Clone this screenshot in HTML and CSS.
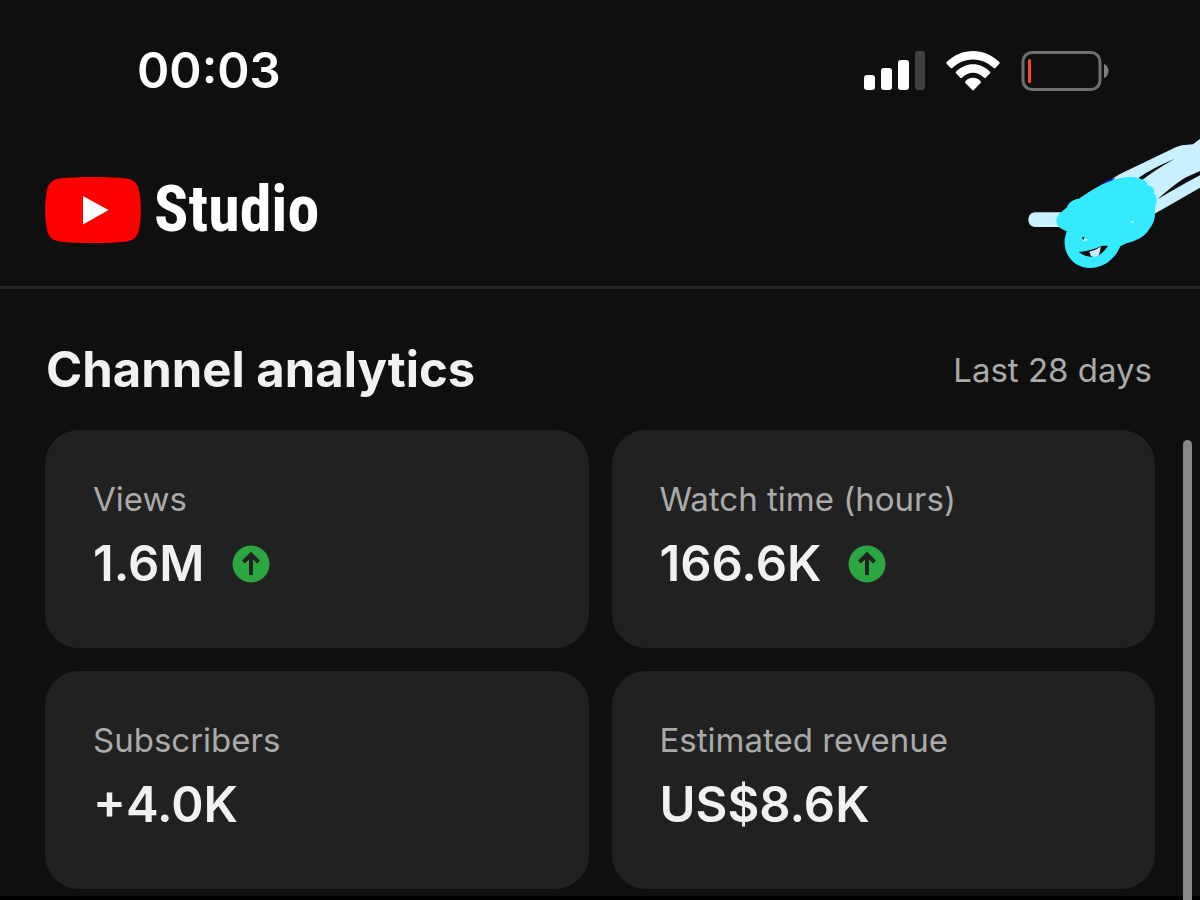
FILE: index.html
```html
<!DOCTYPE html>
<html lang="en">
<head>
<meta charset="utf-8">
<meta name="viewport" content="width=device-width, initial-scale=1">
<title>YouTube Studio</title>
<link rel="stylesheet" href="styles.css">
</head>
<body>
<div class="app">
  <div class="status-bar">
    <time class="clock">00:03</time>
    <div class="status-icons">
      <svg class="signal" viewBox="0 0 62 40" aria-label="Signal strength">
        <rect x="1" y="24" width="11" height="15" rx="3"/>
        <rect x="18" y="17" width="11" height="22" rx="3"/>
        <rect x="35" y="9" width="11" height="30" rx="3"/>
        <rect class="signal-off" x="52" y="0" width="10" height="39" rx="3"/>
      </svg>
      <svg class="wifi" viewBox="0 0 162 120" aria-label="Wi-Fi">
        <path d="M2 38Q0 36 2 33C48-11 114-11 160 33Q162 36 160 38L148 51Q146 53 143 51C106 17 56 17 19 51Q16 53 14 51Z"/>
        <path d="M30 67Q28 65 30 62C60 32 102 32 132 62Q134 65 132 67L119 80Q117 82 114 80C94 60 68 60 48 80Q45 82 43 80Z"/>
        <path d="M58 96Q55 93 59 90C71 77 91 77 103 90Q107 93 104 96L84 116Q81 119 78 116Z"/>
      </svg>
      <svg class="battery" viewBox="0 0 88 40" aria-label="Battery low">
        <rect class="battery-shell" x="2" y="1.500" width="77" height="37" rx="9"/>
        <rect class="battery-level" x="7" y="8" width="3" height="24" rx="1.500"/>
        <path class="battery-tip" d="M83 13C89 15 89 25 83 27Z"/>
      </svg>
    </div>
  </div>

  <header class="header">
    <a class="brand" href="#" aria-label="YouTube Studio">
      <svg class="brand-mark" viewBox="0 0 96 66">
        <path class="brand-tile" d="M14 1.500C34-.5 62-.5 82 1.500Q92 3 94 13C96.500 26 96.500 40 94 53Q92 63 82 64.500C62 66.500 34 66.500 14 64.500Q4 63 2 53C-.5 40-.5 26 2 13Q4 3 14 1.500Z"/>
        <path class="brand-play" d="M38 19L63.500 33L38 47.500Z"/>
      </svg>
      <span class="brand-name">Studio</span>
    </a>
    <svg class="doodle" viewBox="0 0 570 450" aria-hidden="true">
      <path class="doodle-pale" d="M570 27L549 43L515 46Q495 51 480 60L330 132L210 204L180 260L150 247H76C48 247 48 291 76 291H175L300 310L434 251L570 173Z"/>
      <path class="doodle-gap" d="M386 143Q425 115 495 86Q440 116 395 151Z"/>
      <path class="doodle-gap" d="M442 208Q490 165 525 143L570 123V136Q515 165 442 208Z"/>
      <path class="doodle-blue" d="M265 172Q285 150 316 143L300 160Z"/>
      <path class="doodle-cyan" d="M139 270C139 255 158 242 170 233C177 216 188 208 208 206C245 180 280 158 318 148C350 137 378 138 391 147C405 148 413 159 412 165C429 168 434 180 432 190C445 205 440 222 434 235C438 258 432 281 418 297C403 325 367 336 351 339L331 349C316 387 279 414 240 414C194 414 160 377 164 327L170 304C151 296 139 290 139 270Z"/>
      <path class="doodle-gap" d="M206 366Q245 362 277 347L294 347Q276 378 247 381Q222 380 206 366ZM216 322L224 321L221 333Z"/>
      <path class="doodle-pale" d="M238 365Q258 360 273 350L267 374Q256 385 243 378ZM223 323L234 330L218 335Z"/>
      <path class="doodle-pale" d="M361 277L373 271L368 280Z"/>
    </svg>
  </header>

  <main class="content">
    <div class="section-head">
      <h1 class="section-title">Channel analytics</h1>
      <span class="period">Last 28 days</span>
    </div>
    <div class="cards">
      <section class="card">
        <h2 class="card-label">Views</h2>
        <p class="card-value">1.6M
          <svg class="trend" viewBox="0 0 38 38" aria-label="Up"><circle cx="19" cy="19" r="18.500"/><path d="M19 30V10M11.500 17L19 9.500L26.500 17"/></svg>
        </p>
      </section>
      <section class="card">
        <h2 class="card-label">Watch time (hours)</h2>
        <p class="card-value">166.6K
          <svg class="trend" viewBox="0 0 38 38" aria-label="Up"><circle cx="19" cy="19" r="18.500"/><path d="M19 30V10M11.500 17L19 9.500L26.500 17"/></svg>
        </p>
      </section>
      <section class="card">
        <h2 class="card-label">Subscribers</h2>
        <p class="card-value">+4.0K</p>
      </section>
      <section class="card">
        <h2 class="card-label">Estimated revenue</h2>
        <p class="card-value">US$8.6K</p>
      </section>
    </div>
    <div class="scroll-thumb"></div>
  </main>
</div>
</body>
</html>
```
FILE: styles.css
```css
* { box-sizing: border-box; }

body {
  margin: 0;
  background: #000;
  color: #f1f1f1;
  font-family: Inter, "Liberation Sans", sans-serif;
}

.app {
  display: flex;
  flex-direction: column;
  min-height: 100vh;
  background: #0f0f0f;
  border-bottom: 4px solid #000;
}

.status-bar {
  display: flex;
  align-items: center;
  justify-content: space-between;
  height: 142px;
  padding: 0 91px 0 137px;
}

.clock {
  color: #fff;
  font-size: 49px;
  font-weight: 600;
  line-height: 60px;
}

.status-icons {
  display: flex;
  align-items: center;
  gap: 21px;
}

.signal { width: 62px; height: 40px; fill: #fff; }
.signal-off { fill: #404040; }
.wifi { width: 54px; height: 40px; fill: #fff; }
.battery { width: 88px; height: 40px; }
.battery-shell { fill: none; stroke: #6f6f6f; stroke-width: 3; }
.battery-level { fill: #ff453a; }
.battery-tip { fill: #7d7d7d; }

.header {
  position: relative;
  height: 147px;
  padding: 35px 45px 0;
  border-bottom: 3px solid #272727;
}

.brand {
  display: inline-flex;
  align-items: center;
  gap: 13px;
  height: 66px;
  color: #fff;
  text-decoration: none;
}

.brand-mark { width: 96px; height: 66px; }
.brand-tile { fill: #f00; }
.brand-play { fill: #fff; }

.brand-name {
  font-family: "Liberation Sans Narrow", "Roboto Condensed", "Open Sans Condensed", Roboto, sans-serif;
  font-size: 64px;
  font-weight: 700;
  line-height: 68px;
}

.doodle {
  position: absolute;
  top: -12px;
  right: 0;
  width: 190px;
  height: 150px;
}

.doodle-pale { fill: #c9f0ff; }
.doodle-gap { fill: #0f0f0f; }
.doodle-blue { fill: #0c20d8; }
.doodle-cyan { fill: #33eaff; }

.content {
  position: relative;
  flex: 1;
  padding: 51px 45px 7px;
}

.section-head {
  display: flex;
  align-items: center;
  justify-content: space-between;
  margin-bottom: 30px;
  padding: 0 3px 0 1px;
}

.section-title {
  margin: 0;
  font-size: 49px;
  font-weight: 700;
  line-height: 60px;
}

.period,
.card-label {
  color: #aaa;
  font-size: 33px;
  font-weight: 400;
  line-height: 40px;
}

.cards {
  display: grid;
  grid-template-columns: 1fr 1fr;
  gap: 23px;
}

.card {
  min-height: 218px;
  padding: 49px 48px;
  border-radius: 34px;
  background: #212121;
}

.card-label { margin: 0; }

.card-value {
  display: flex;
  align-items: center;
  gap: 27px;
  margin: 15px 0 0;
  font-size: 49px;
  font-weight: 600;
  line-height: 60px;
}

.trend { width: 38px; height: 38px; }
.trend circle { fill: #2ba640; }
.trend path { fill: none; stroke: #212121; stroke-width: 4; }

.scroll-thumb {
  position: absolute;
  top: 151px;
  right: 8px;
  bottom: -4px;
  width: 9px;
  border-radius: 5px 5px 0 0;
  background: #888;
}
```
